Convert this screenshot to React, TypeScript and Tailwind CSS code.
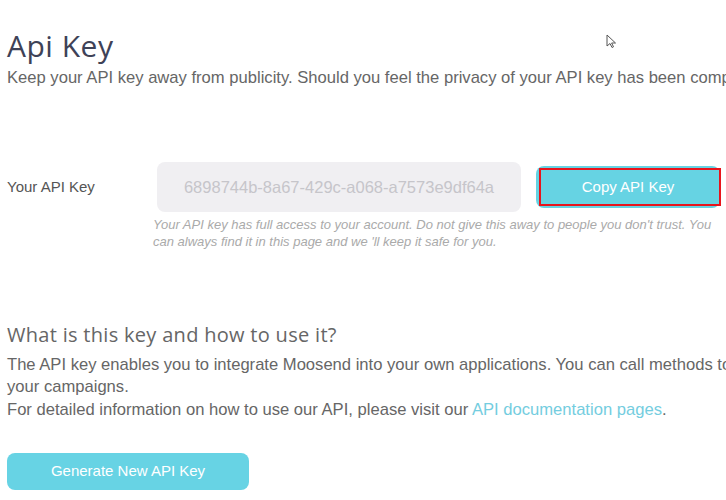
export default function App() {
  return (
    <div className="relative w-[726px] h-[500px] overflow-hidden bg-white font-['Liberation_Sans',Arial,sans-serif]">
      {/* mouse cursor captured in the screenshot */}
      <svg className="absolute left-[606px] top-[34px]" width="11" height="15" viewBox="0 0 11 15">
        <path d="M1 1 L1 12 L4 9.5 L6 13.5 L7.5 12.8 L5.6 9 L9.5 9 Z" fill="white" stroke="#555" strokeWidth="1" />
      </svg>

      <div className="px-[7px] pt-[27px]">
        <h1 className="text-[30px] leading-[38px] text-[#3e4257] font-['Open_Sans',sans-serif] tracking-[0.5px]">Api Key</h1>
        <p className="mt-[3px] whitespace-nowrap text-[16.6px] leading-[20px] text-[#666]">
          Keep your API key away from publicity. Should you feel the privacy of your API key has been compromised, generate a new one.
        </p>
      </div>

      <div className="flex items-center mt-[74px] pl-[7px]">
        <div className="w-[150px] text-[15px] text-[#555]">Your API Key</div>
        <div className="w-[364px] h-[50px] rounded-[8px] bg-[#f0eff2] flex items-center justify-center text-[16.5px] text-[#c6c5ca]">
          6898744b-8a67-429c-a068-a7573e9df64a
        </div>
        <button className="relative ml-[15px] w-[184px] h-[42px] rounded-[8px] bg-[#66d3e3] text-white text-[15px]">
          Copy API Key
          <span className="absolute left-[3px] top-[2px] right-[-1px] bottom-[2px] border-2 border-[#e8141c]" />
        </button>
      </div>

      <p className="ml-[153px] mt-[4px] w-[570px] text-[13px] leading-[17px] italic text-[#aaa]">
        Your API key has full access to your account. Do not give this away to people you don't trust. You can always find it in this page and we 'll keep it safe for you.
      </p>

      <div className="px-[7px] mt-[71px]">
        <h2 className="text-[20px] leading-[28px] text-[#666] font-['Open_Sans',sans-serif] tracking-[0.3px]">What is this key and how to use it?</h2>
        <p className="mt-[5px] whitespace-nowrap text-[16.6px] leading-[22px] text-[#666]">
          The API key enables you to integrate Moosend into your own applications. You can call methods to manage
        </p>
        <p className="text-[16.6px] leading-[22px] text-[#666]">your campaigns.</p>
        <p className="mt-[1px] text-[16.6px] leading-[22px] text-[#666]">
          For detailed information on how to use our API, please visit our{' '}
          <a className="text-[#74cde0]">API documentation pages</a>.
        </p>
        <button className="mt-[32px] w-[242px] h-[37px] rounded-[8px] bg-[#67d3e4] text-white text-[15px]">
          Generate New API Key
        </button>
      </div>
    </div>
  );
}
